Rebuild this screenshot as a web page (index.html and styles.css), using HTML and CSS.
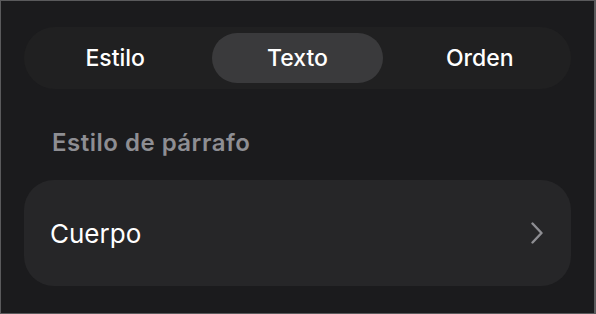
FILE: index.html
```html
<!DOCTYPE html>
<html lang="es">
<head>
    <meta charset="UTF-8">
    <meta name="viewport" content="width=device-width, initial-scale=1.0">
    <title>Formato</title>
    <link rel="stylesheet" href="styles.css">
</head>
<body>
    <div class="screen">
        <div class="segments">
            <div class="segment">Estilo</div>
            <div class="segment active">Texto</div>
            <div class="segment">Orden</div>
        </div>

        <div class="section-title">Estilo de párrafo</div>

        <div class="row">
            <span class="row-label">Cuerpo</span>
            <svg class="chevron" width="12" height="22" viewBox="0 0 12 22">
                <path d="M1.5 1.5 L10.5 11 L1.5 20.5" fill="none" stroke="#8e8e93" stroke-width="2.4" stroke-linecap="round" stroke-linejoin="round"/>
            </svg>
        </div>
    </div>
</body>
</html>
```

FILE: styles.css
```css
html, body {
    margin: 0;
    background-color: #1b1b1d;
}

body {
    font-family: Inter, "Noto Sans", sans-serif;
    color: #fff;
}

.screen {
    width: 596px;
    height: 314px;
    box-sizing: border-box;
    border: 1px solid #5a5a5c;
    border-right-width: 2px;
    padding: 26px 23px 0 23px;
}

.segments {
    display: flex;
    height: 62px;
    background-color: #202021;
    border-radius: 31px;
}

.segment {
    flex: 1;
    margin: 6px;
    display: flex;
    align-items: center;
    justify-content: center;
    font-size: 23px;
    font-weight: 500;
    border-radius: 25px;
}

.segment.active {
    background-color: #3a3a3c;
}

.section-title {
    margin: 40px 0 23px 28px;
    font-size: 24px;
    line-height: 28px;
    font-weight: 600;
    letter-spacing: 0.5px;
    color: #8e8e93;
}

.row {
    height: 106px;
    display: flex;
    align-items: center;
    justify-content: space-between;
    padding: 0 28px 0 26px;
    background-color: #262628;
    border-radius: 30px;
}

.row-label {
    font-size: 26px;
}

.chevron {
    display: block;
}
```
